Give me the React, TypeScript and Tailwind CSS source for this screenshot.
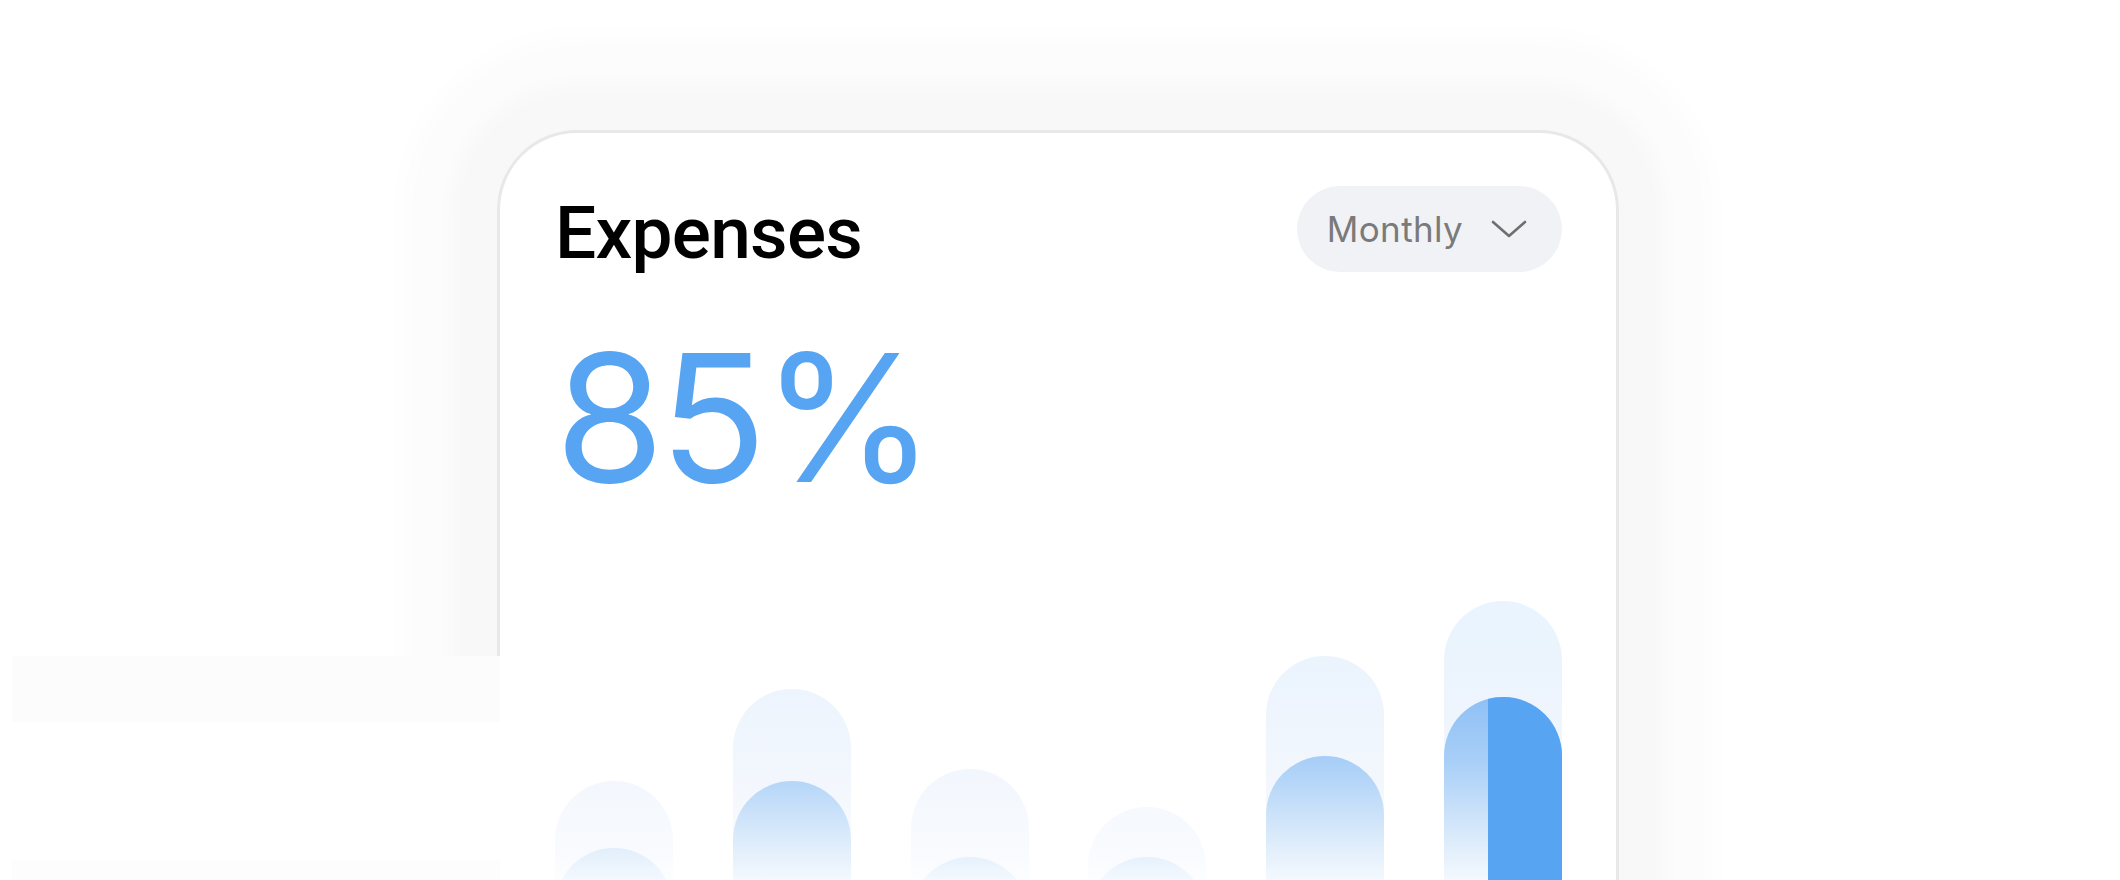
import React from "react";

const bars = [
  { bg: 136, fg: 69 },
  { bg: 228, fg: 136 },
  { bg: 148, fg: 60 },
  { bg: 110, fg: 60 },
  { bg: 261, fg: 161 },
  { bg: 316, fg: 220, active: true },
];

const bgGrad =
  "bg-[linear-gradient(to_bottom,#eaf4fe_0%,#eaf4fe_12%,#ecf4fd_28%,#f3f7fd_58%,#f9fbfe_82%,#fdfeff_90%,#ffffff_100%)] bg-[length:100%_330px] bg-bottom bg-no-repeat";
const fgGrad =
  "bg-[linear-gradient(to_bottom,#7fb8f4_0%,#8ec0f5_33%,#a6cdf7_51%,#b5d6f8_59%,#d0e5fa_71%,#e3effb_80%,#f6faff_90%,#ffffff_100%)] bg-[length:100%_330px] bg-bottom bg-no-repeat";

function Bar({ bg, fg, active }: { bg: number; fg: number; active?: boolean }) {
  return (
    <div className="relative w-[118px] flex flex-col justify-end" style={{ height: bg }}>
      <div className={`absolute inset-0 rounded-t-full ${bgGrad}`} />
      <div className={`relative w-full rounded-t-full ${fgGrad}`} style={{ height: fg }}>
        {active && (
          <div className="absolute inset-0 rounded-t-full bg-[#56a4f2] [clip-path:inset(0_0_0_44px)]" />
        )}
      </div>
    </div>
  );
}

export default function App() {
  return (
    <div className="relative h-[880px] w-[2120px] overflow-hidden bg-white font-['Inter',sans-serif]">
      <div className="pl-[497px] pt-[130px]">
        <div className="flex h-[830px] w-[1122px] flex-col rounded-[80px] border-[3px] border-[#e8e8e8] bg-white pl-[55px] pr-[54px] pb-[40px] pt-[53px] shadow-[0_0_16px_46px_#f8f8f8,0_0_28px_94px_#fcfcfc]">
          <div className="flex items-center justify-between">
            <h2 className="mt-[8px] font-['Roboto',sans-serif] text-[73px] font-medium leading-none tracking-[-0.01em] text-black">
              Expenses
            </h2>
            <button className="flex h-[86px] items-center gap-[28px] rounded-full bg-[#f0f2f6] pl-[30px] pr-[35px]">
              <span className="text-[35px] leading-none tracking-[0.01em] text-[#7a7a7a]">Monthly</span>
              <svg width="36" height="18" viewBox="0 0 36 18" fill="none">
                <path d="M2 2 L18 16 L34 2" stroke="#6f6f6f" strokeWidth="2.6" strokeLinecap="round" strokeLinejoin="round" />
              </svg>
            </button>
          </div>
          <div className="mt-[58px] text-[177px] font-normal leading-none tracking-[-0.03em] text-[#56a4f2]">
            85%
          </div>
          <div className="flex flex-1 items-end justify-between">
            {bars.map((b, i) => (
              <Bar key={i} {...b} />
            ))}
          </div>
        </div>
      </div>
      <div className="absolute left-[12px] top-[656px] flex h-[224px] w-[488px] flex-col">
        <div className="h-[66px] bg-[#fcfcfc]" />
        <div className="flex-1 bg-white" />
        <div className="h-[20px] bg-[#fdfdfd]" />
      </div>
    </div>
  );
}
